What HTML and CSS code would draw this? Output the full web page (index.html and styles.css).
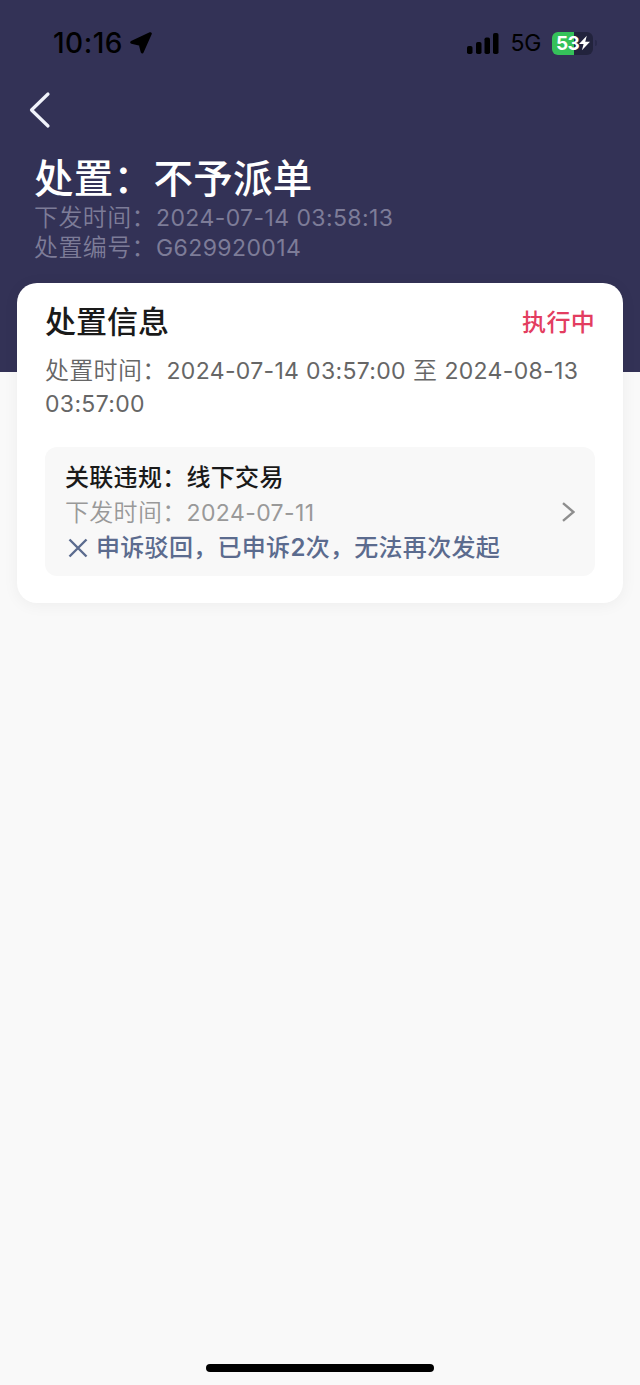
FILE: index.html
```html
<!DOCTYPE html>
<html lang="zh-CN">
<head>
    <meta charset="UTF-8">
    <meta name="viewport" content="width=device-width, initial-scale=1.0">
    <title>处置详情</title>
    <link rel="stylesheet" href="styles.css">
</head>
<body>
    <div class="header">
        <div class="status-bar">
            <div class="status-left">
                <span class="time">10:16</span>
                <svg width="22" height="22" viewBox="0 0 22 22">
                    <path d="M20.3 1.7 12.2 20 10.2 12.2 1.7 10.4Z" fill="#000" stroke="#000" stroke-width="3" stroke-linejoin="round"/>
                </svg>
            </div>
            <div class="status-right">
                <svg class="signal" width="32" height="21" viewBox="0 0 32 21">
                    <rect x="0" y="13" width="5.5" height="8" rx="1.8"/>
                    <rect x="9" y="9" width="5.5" height="12" rx="1.8"/>
                    <rect x="17.5" y="4.5" width="5.5" height="16.5" rx="1.8"/>
                    <rect x="26" y="0" width="5.5" height="21" rx="1.8"/>
                </svg>
                <span class="network">5G</span>
                <div class="battery">
                    <span>53</span>
                    <svg width="11" height="16" viewBox="0 0 12 16">
                        <path d="M8.5 0 0 9h5L3.2 16 12 6.6H6.8Z" fill="#fff"/>
                    </svg>
                </div>
                <i class="battery-cap"></i>
            </div>
        </div>
        <div class="nav">
            <svg width="22" height="38" viewBox="0 0 22 38">
                <path d="M19 3 2.5 19 19 35" fill="none" stroke="#f1f3fb" stroke-width="3.2" stroke-linecap="round" stroke-linejoin="round"/>
            </svg>
        </div>
        <h1>处置：不予派单</h1>
        <p>下发时间：<span class="num">2024-07-14 03:58:13</span></p>
        <p>处置编号：<span class="num">G629920014</span></p>
    </div>

    <div class="card">
        <div class="card-title">
            <h2>处置信息</h2>
            <span class="state">执行中</span>
        </div>
        <div class="period">
            <p>处置时间：<span class="num">2024-07-14 03:57:00</span> 至 <span class="num">2024-08-13</span></p>
            <p><span class="num">03:57:00</span></p>
        </div>
        <div class="violation">
            <div class="violation-info">
                <h3>关联违规：线下交易</h3>
                <p class="date">下发时间：<span class="num">2024-07-11</span></p>
                <p class="appeal">
                    <svg width="20" height="20" viewBox="0 0 20 20">
                        <path d="M1.5 1.5 18.5 18.5M18.5 1.5 1.5 18.5" fill="none" stroke="#5b6b8e" stroke-width="2.4"/>
                    </svg>
                    <span>申诉驳回，已申诉<b>2</b>次，无法再次发起</span>
                </p>
            </div>
            <svg class="arrow" width="14" height="20" viewBox="0 0 14 20">
                <path d="M2 1.2 12.5 10 2 18.8" fill="none" stroke="#8e8e8e" stroke-width="2.4"/>
            </svg>
        </div>
    </div>

    <div class="home-bar"></div>
</body>
</html>
```

FILE: styles.css
```css
* {
    box-sizing: border-box;
}
body {
    margin: 0;
    min-height: 1385px;
    display: flex;
    flex-direction: column;
    background-color: #f9f9f9;
    font-family: Inter, "Noto Sans CJK SC", sans-serif;
    color: #1a1a1a;
}
h1, h2, h3, p {
    margin: 0;
    white-space: nowrap;
}
.header {
    height: 372px;
    background-color: #333256;
    padding: 0 34px;
    color: #fff;
}
.status-bar {
    height: 86px;
    padding: 0 9px 0 19px;
    display: flex;
    align-items: center;
    justify-content: space-between;
    color: #000;
}
.status-left, .status-right {
    display: flex;
    align-items: center;
}
.status-left {
    gap: 7px;
}
.time {
    font-size: 28px;
    font-weight: 500;
    letter-spacing: 0.5px;
}
.network {
    margin-left: 11px;
    font-size: 23px;
    letter-spacing: -0.3px;
}
.battery {
    width: 41px;
    height: 23px;
    margin-left: 11px;
    padding-left: 4px;
    display: flex;
    align-items: center;
    border-radius: 6px;
    background: linear-gradient(90deg, #35c15a 22px, #22233d 22px);
    color: #fff;
    font-size: 19px;
    font-weight: 700;
    letter-spacing: -0.6px;
}
.battery-cap {
    width: 2px;
    height: 6px;
    margin-left: 2px;
    border-radius: 0 2px 2px 0;
    background-color: #29294a;
}
.nav {
    height: 66px;
    margin-left: -5px;
    padding-top: 5px;
}
.header h1 {
    height: 51px;
    line-height: 54px;
    font-size: 39.5px;
    font-weight: 500;
    letter-spacing: 0.3px;
}
.header p {
    height: 30px;
    line-height: 30px;
    font-size: 24px;
    font-weight: 350;
    letter-spacing: 0.4px;
    color: #7d7c98;
}
.num {
    font-size: 23px;
    font-weight: 400;
    letter-spacing: 0.4px;
}
.card {
    width: 606px;
    height: 320px;
    margin: -89px auto 0;
    padding: 16px 28px 0;
    border-radius: 20px;
    background-color: #fff;
    box-shadow: 0 2px 16px rgba(0, 0, 0, 0.05);
}
.card-title {
    height: 42px;
    display: flex;
    align-items: center;
    justify-content: space-between;
}
.card-title h2 {
    margin-top: -2px;
    font-size: 31px;
    font-weight: 500;
}
.state {
    font-size: 24px;
    font-weight: 500;
    letter-spacing: 0.3px;
    color: #e33d60;
}
.period {
    margin-top: 13px;
    font-size: 24px;
    font-weight: 350;
    letter-spacing: 0.3px;
    color: #666;
}
.period p {
    height: 33px;
    line-height: 33px;
}
.period .num {
    letter-spacing: 0.33px;
}
.violation {
    height: 129px;
    margin-top: 27px;
    padding: 13px 20px 0;
    display: flex;
    justify-content: space-between;
    border-radius: 12px;
    background-color: #f8f8f8;
}
.violation h3, .violation p {
    height: 35px;
    line-height: 36px;
    font-size: 24px;
    font-weight: 500;
    letter-spacing: 0.3px;
}
.violation .date {
    font-weight: 350;
    color: #999;
}
.appeal {
    display: flex;
    align-items: center;
    gap: 8px;
    padding-left: 3px;
    color: #5b6b8e;
}
.appeal b {
    font-weight: 600;
}
.arrow {
    margin-top: 42px;
}
.home-bar {
    width: 228px;
    height: 8px;
    margin: auto auto 13px;
    border-radius: 4px;
    background-color: #000;
}
```
